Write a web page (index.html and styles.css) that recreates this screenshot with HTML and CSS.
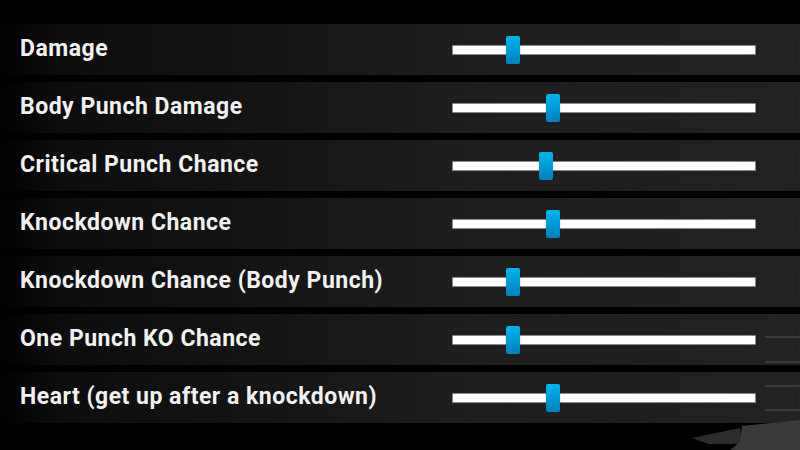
FILE: index.html
```html
<!DOCTYPE html>
<html>
<head>
<meta charset="utf-8">
<link rel="stylesheet" href="styles.css">
</head>
<body>
<div class="screen">
  <div class="list">
    <div class="row"><span class="label">Damage</span><div class="slider"><div class="track"><div class="thumb" style="left: 17.5%"></div></div></div></div>
    <div class="row"><span class="label">Body Punch Damage</span><div class="slider"><div class="track"><div class="thumb" style="left: 30.8%"></div></div></div></div>
    <div class="row"><span class="label">Critical Punch Chance</span><div class="slider"><div class="track"><div class="thumb" style="left: 28.5%"></div></div></div></div>
    <div class="row"><span class="label">Knockdown Chance</span><div class="slider"><div class="track"><div class="thumb" style="left: 30.8%"></div></div></div></div>
    <div class="row"><span class="label">Knockdown Chance (Body Punch)</span><div class="slider"><div class="track"><div class="thumb" style="left: 17.5%"></div></div></div></div>
    <div class="row"><span class="label">One Punch KO Chance</span><div class="slider"><div class="track"><div class="thumb" style="left: 17.5%"></div></div></div></div>
    <div class="row"><span class="label">Heart (get up after a knockdown)</span><div class="slider"><div class="track"><div class="thumb" style="left: 30.8%"></div></div></div></div>
  </div>
  <div class="deco-lines">
    <span class="dl dl1"></span><span class="dl dl2"></span><span class="dl dl3"></span><span class="dl dl4"></span>
  </div>
  <svg class="deco-floor" width="110" height="30" viewBox="0 0 110 30">
    <polygon points="2,18 50,8 52,24 18,24" fill="#2c2c2c"/>
    <polygon points="52,6 110,0 110,30 40,30 50,22" fill="#3a3a3a"/>
  </svg>
</div>
</body>
</html>
```
FILE: styles.css
```css
* { box-sizing: border-box; }
html, body { margin: 0; padding: 0; background: #000; }
.screen {
  position: relative;
  width: 800px;
  height: 450px;
  overflow: hidden;
  background: #000;
  padding-top: 24px;
}
.list {
  display: flex;
  flex-direction: column;
  gap: 7px;
}
.row {
  height: 51px;
  display: flex;
  align-items: center;
  justify-content: space-between;
  padding-left: 20px;
  background: linear-gradient(to right, #000 0px, #0d0d0d 60px, #161616 300px, #1e1e1e 450px, #222 800px);
}
.label {
  font-family: Roboto, "Liberation Sans", sans-serif;
  font-weight: 700;
  font-size: 23px;
  line-height: 1;
  letter-spacing: 0.5px;
  color: #f2f2f2;
  margin-top: -2px;
}
.slider {
  width: 348px;
  height: 28px;
  display: flex;
  align-items: center;
  border-right: 1px solid #262626;
  padding-right: 43px;
}
.track {
  position: relative;
  width: 304px;
  height: 10px;
  background: #fff;
  border: 1px solid #8a8a8a;
  border-radius: 1px;
}
.thumb {
  position: absolute;
  top: -10px;
  width: 14px;
  height: 28px;
  border-radius: 2px;
  background: linear-gradient(to bottom, #00b4ec 0%, #0099d3 50%, #0080bb 100%);
  box-shadow: 0 0 1px rgba(0, 60, 100, 0.8);
}
.deco-lines { position: absolute; right: 0; top: 0; width: 35px; height: 450px; }
.dl { position: absolute; left: 0; width: 35px; height: 2px; background: #3a3a3a; }
.dl1 { top: 336px; }
.dl2 { top: 361px; }
.dl3 { top: 385px; }
.dl4 { top: 409px; }
.deco-floor { position: absolute; right: 0; bottom: 0; }
```
